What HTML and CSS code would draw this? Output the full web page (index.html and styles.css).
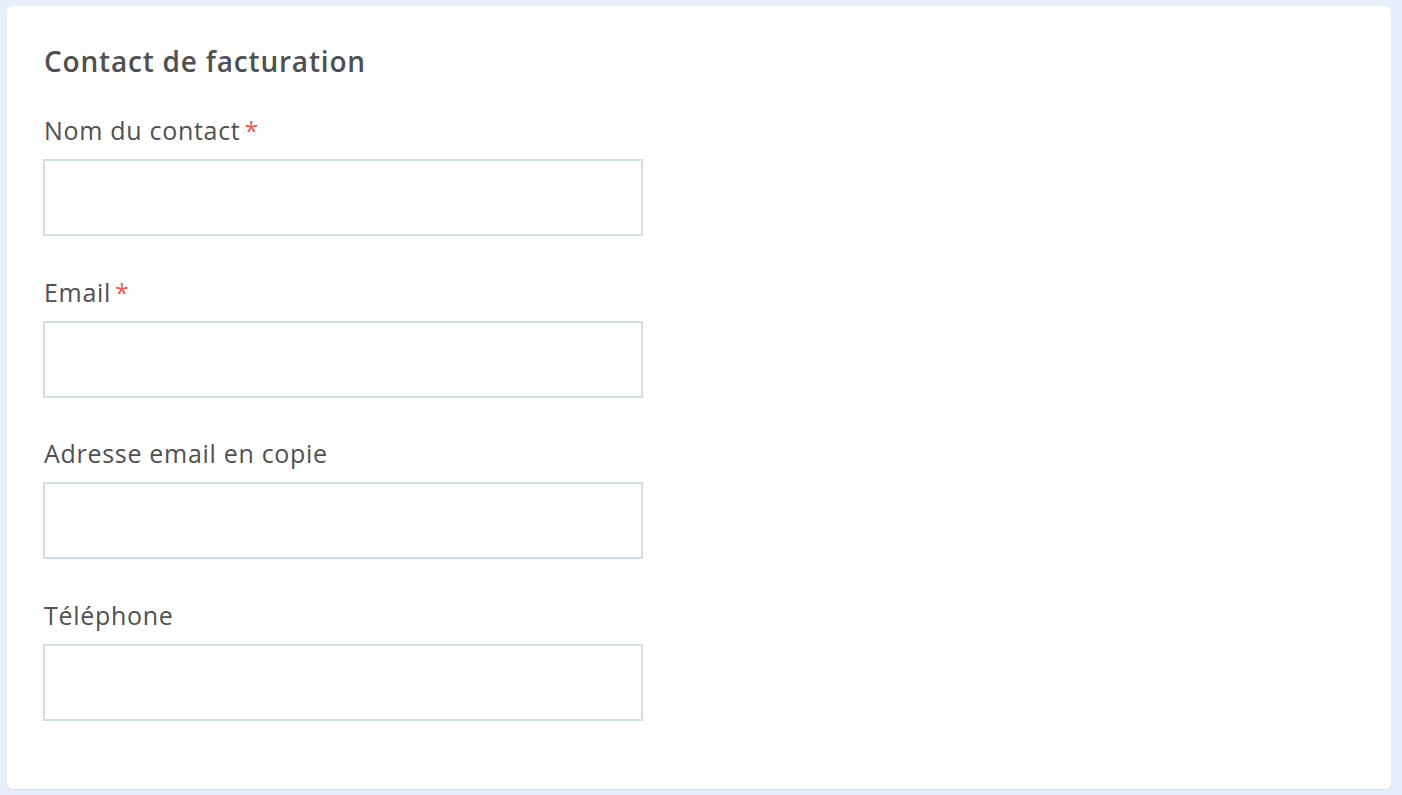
FILE: index.html
```html
<!DOCTYPE html>
<html lang="fr">
	<head>
		<meta charset="utf-8">
		<meta name="viewport" content="width=device-width, initial-scale=1">
		<link rel="stylesheet" href="styles.css">
	</head>

	<body>
		<div class='card'>
			<h2 class='title'>Contact de facturation</h2>

			<div class='field'>
				<label class='label' for='nom'>Nom du contact<span class='req'>*</span></label>
				<input class='input' id='nom' type='text'>
			</div>

			<div class='field'>
				<label class='label' for='email'>Email<span class='req'>*</span></label>
				<input class='input' id='email' type='email'>
			</div>

			<div class='field'>
				<label class='label' for='copie'>Adresse email en copie</label>
				<input class='input' id='copie' type='email'>
			</div>

			<div class='field'>
				<label class='label' for='tel'>Téléphone</label>
				<input class='input' id='tel' type='tel'>
			</div>
		</div>
	</body>
</html>
```

FILE: styles.css
```css
html {
	background-color: #e8eefc;
}

body {
	margin: 0;
	padding: 6px 11px 6px 7px;
	font-family: "Open Sans", "Noto Sans", sans-serif;
	color: #505050;
}

.card {
	background-color: #fff;
	border-radius: 6px;
	padding: 36px 36px 68px;
	box-shadow: 0 1px 2px rgba(120, 140, 190, 0.15);
}

.title {
	margin: 0 0 34px 1px;
	font-size: 28px;
	line-height: 38px;
	font-weight: 600;
	letter-spacing: 0.8px;
}

.field {
	display: flex;
	flex-direction: column;
	align-items: flex-start;
	margin-bottom: 39.6px;
}

.field:last-child {
	margin-bottom: 0;
}

.label {
	margin: 0 0 13px 1px;
	font-size: 25px;
	line-height: 32px;
	letter-spacing: 0.7px;
}

.req {
	color: #f25757;
	margin-left: 4px;
}

.input {
	box-sizing: border-box;
	width: 600px;
	height: 77px;
	margin: 0;
	border: 2px solid #d3dde8;
	border-radius: 0;
	outline: none;
	background: #fff;
}
```
